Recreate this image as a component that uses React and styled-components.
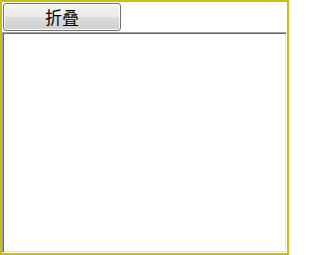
import React from "react"
import styled, { createGlobalStyle } from "styled-components"

const GlobalStyle = createGlobalStyle`
  html, body {
    margin: 0;
    padding: 0;
    background: #ffffff;
  }
  * {
    box-sizing: border-box;
  }
`

const Frame = styled.div`
  display: flex;
  flex-direction: column;
  width: 289px;
  height: 255px;
  border: 2px solid #c4c400;
  background: #ffffff;
  font-family: "Noto Sans CJK SC", "Noto Sans", sans-serif;
`

const Toolbar = styled.div`
  display: flex;
  padding: 1px 0 1px 1px;
`

const Button = styled.button`
  width: 118px;
  height: 28px;
  padding: 0;
  border: 1px solid #707070;
  border-radius: 3px;
  background: linear-gradient(
    to bottom,
    #f2f2f2 0%,
    #ebebeb 50%,
    #dddddd 50%,
    #cfcfcf 100%
  );
  box-shadow: inset 0 0 0 1px #fcfcfc;
  color: #000000;
  font-family: "Noto Sans CJK SC", sans-serif;
  font-size: 17px;
  line-height: 26px;
  text-align: center;
  cursor: pointer;
`

const Panel = styled.div`
  flex: 1;
  border-style: solid;
  border-width: 1px;
  border-color: #a0a0a0 #ffffff #ffffff #a0a0a0;
  box-shadow: inset 1px 1px 0 #696969, inset -1px -1px 0 #e3e3e3;
  background: #ffffff;
`

export default function App() {
  return (
    <>
      <GlobalStyle />
      <Frame>
        <Toolbar>
          <Button>折叠</Button>
        </Toolbar>
        <Panel />
      </Frame>
    </>
  )
}
